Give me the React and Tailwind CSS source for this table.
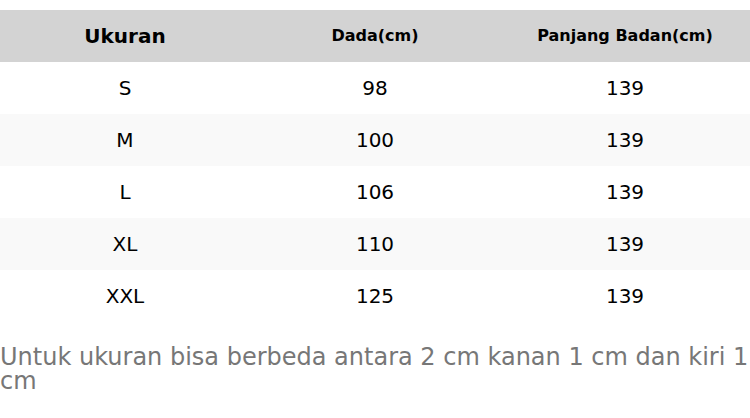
const rows = [
  ["S", "98", "139"],
  ["M", "100", "139"],
  ["L", "106", "139"],
  ["XL", "110", "139"],
  ["XXL", "125", "139"],
];

export default function App() {
  return (
    <div className="w-[750px] h-[418px] bg-white pt-[10px] font-['DejaVu_Sans',sans-serif] overflow-hidden">
      <div className="grid grid-cols-3 h-[52px] bg-[#d3d3d3] items-center text-center font-bold text-black">
        <div className="text-[20px]">Ukuran</div>
        <div className="text-[16px]">Dada(cm)</div>
        <div className="text-[16px]">Panjang Badan(cm)</div>
      </div>
      {rows.map((r, i) => (
        <div
          key={i}
          className={
            "grid grid-cols-3 h-[52px] items-center text-center text-[20px] text-black " +
            (i % 2 === 1 ? "bg-[#f9f9f9]" : "bg-white")
          }
        >
          {r.map((c, j) => (
            <div key={j}>{c}</div>
          ))}
        </div>
      ))}
      <p className="mt-[23px] text-[24px] leading-[24px] text-[#777777]">
        Untuk ukuran bisa berbeda antara 2 cm kanan 1 cm dan kiri 1 cm
      </p>
    </div>
  );
}
